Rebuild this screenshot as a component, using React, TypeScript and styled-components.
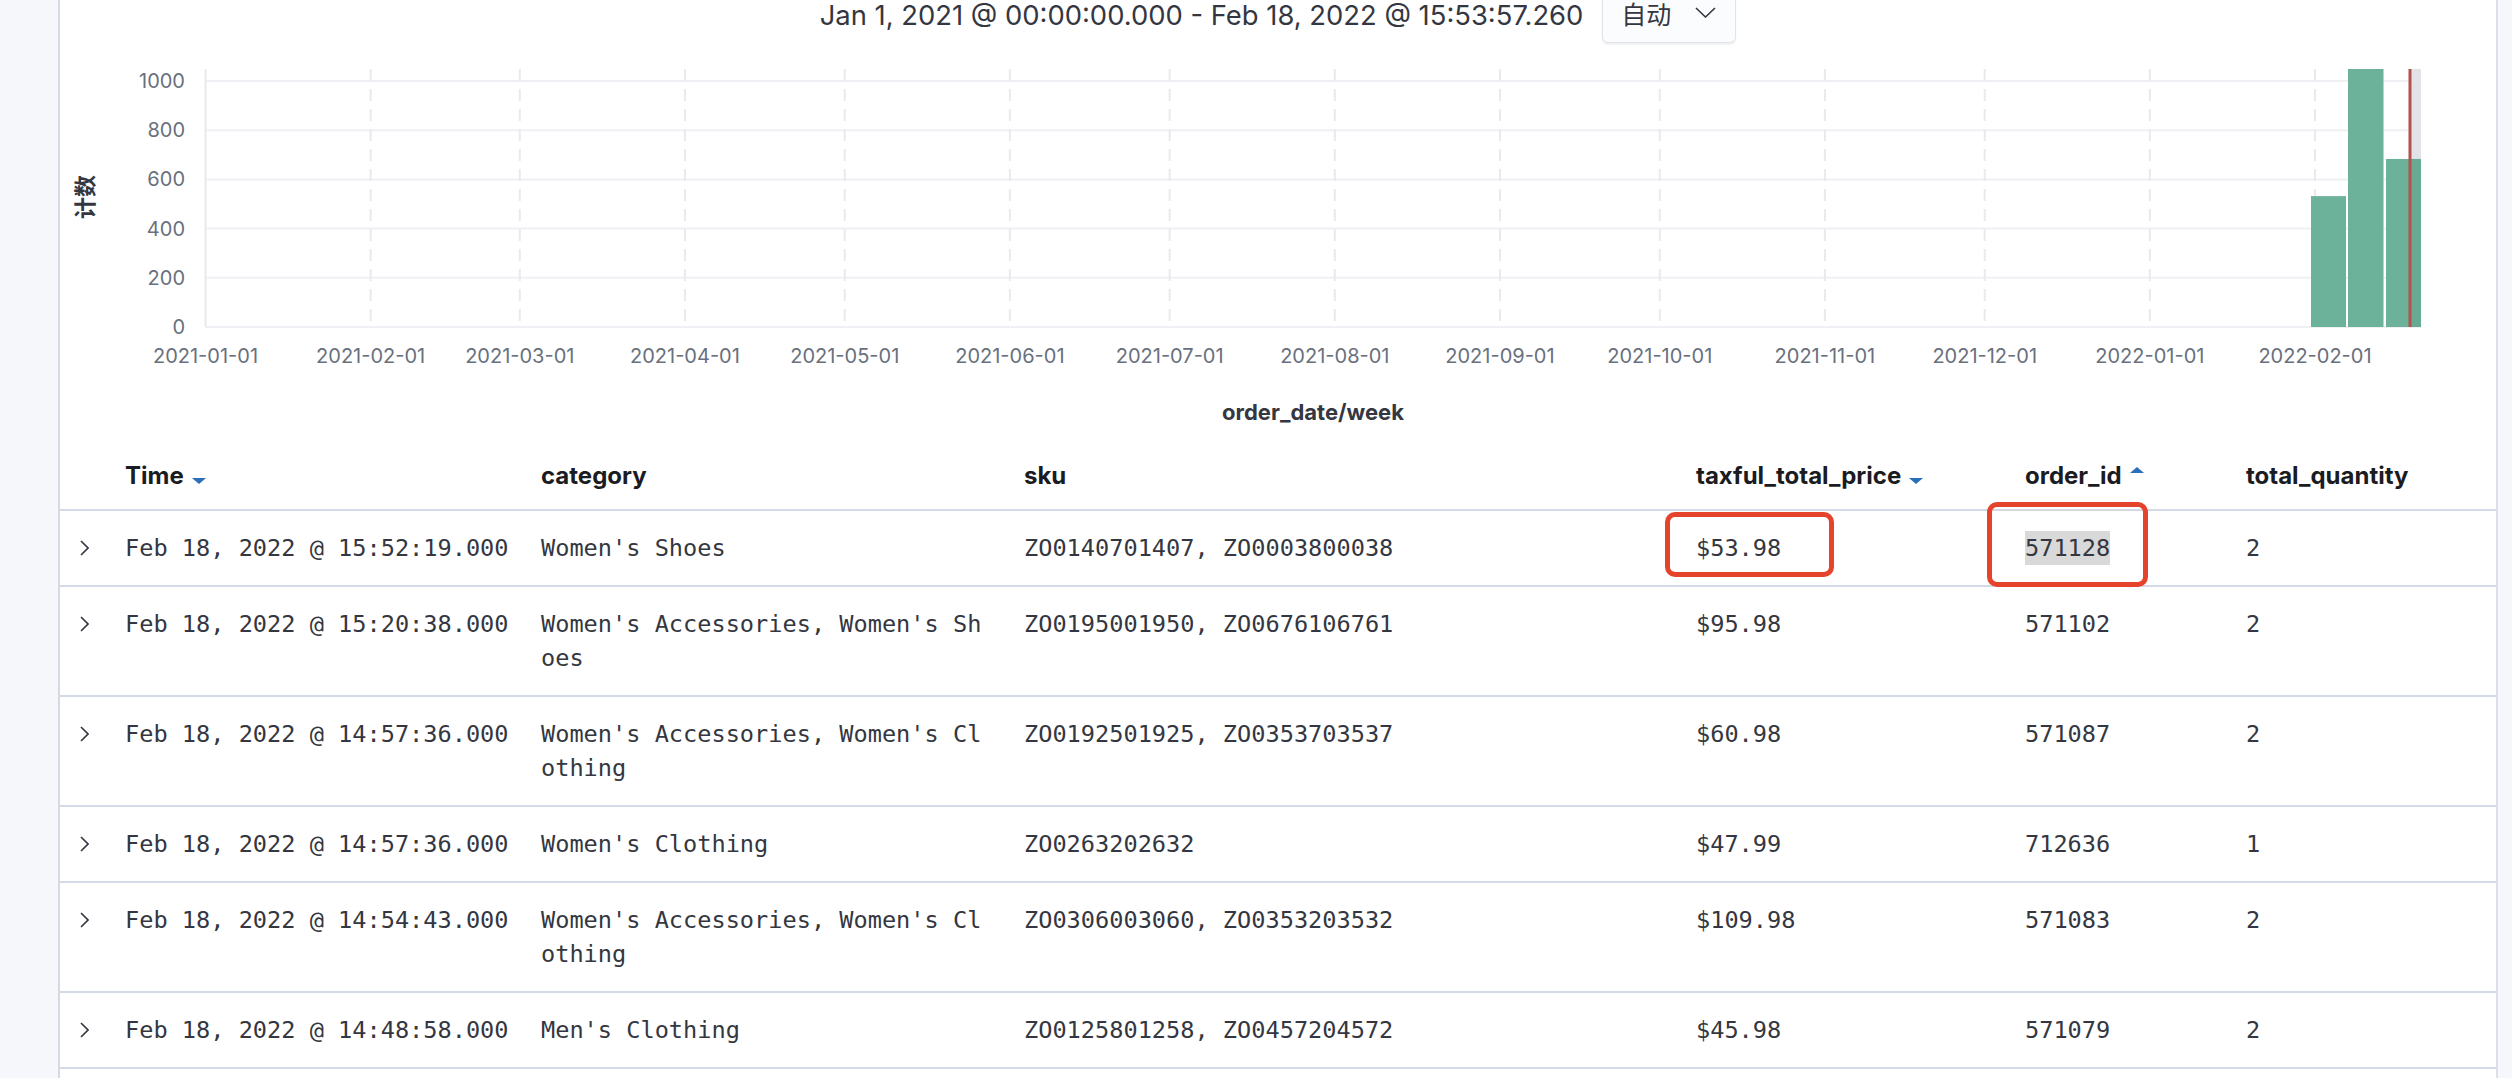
import styled, { createGlobalStyle } from 'styled-components'

const GlobalStyle = createGlobalStyle`
  html, body {
    margin: 0;
    padding: 0;
  }
  body {
    background: #f5f7fa;
    font-family: Inter, "Noto Sans CJK SC", sans-serif;
    color: #343741;
  }
`

const Page = styled.div`
  display: flex;
  min-height: 100vh;
  overflow: hidden;
`

const Gutter = styled.div<{ $w: number }>`
  flex: none;
  width: ${(p) => p.$w}px;
  background: #f6f7fb;
`

const Panel = styled.main`
  flex: 1;
  min-width: 0;
  background: #fff;
  border-left: 2px solid #d3dae6;
  border-right: 2px solid #dcdfea;
  display: flex;
  flex-direction: column;
`

const TopBar = styled.div`
  display: flex;
  justify-content: center;
  align-items: flex-start;
  gap: 19px;
  height: 51px;
  margin-top: -8px;
`

const Range = styled.span`
  margin-top: 8px;
  font-size: 27.4px;
  line-height: 30px;
  color: #343741;
  white-space: nowrap;
`

const IntervalButton = styled.button`
  display: flex;
  align-items: flex-start;
  justify-content: space-between;
  box-sizing: border-box;
  width: 134px;
  height: 51px;
  padding: 5px 19px 0 18px;
  background: #fbfcfd;
  border: 1px solid #e1e4ea;
  border-radius: 6px;
  box-shadow: 0 2px 2px rgba(0, 0, 0, 0.06);
  font-family: "Noto Sans CJK SC", sans-serif;
  font-size: 25px;
  line-height: 30px;
  color: #343741;

  svg {
    margin-top: 9px;
  }
`

const ChartSvg = styled.svg`
  display: block;
  font-family: Inter, "Noto Sans CJK SC", sans-serif;
`

const COLS = '65px 416px 483px 672px 329px 221px 1fr'

const HeaderRow = styled.div`
  display: grid;
  grid-template-columns: ${COLS};
  box-sizing: border-box;
  height: 72px;
  padding-top: 22px;
  border-bottom: 2px solid #d3dae6;
`

const HeadCell = styled.div`
  font-size: 24px;
  line-height: 30px;
  font-weight: 700;
  color: #1a1c21;
  white-space: nowrap;

  svg {
    vertical-align: baseline;
    margin-left: 8px;
  }
`

const Row = styled.div`
  display: grid;
  grid-template-columns: ${COLS};
  border-bottom: 2px solid #d3dae6;
`

const Cell = styled.div`
  position: relative;
  padding: 20px 30px 20px 0;
  font-family: "DejaVu Sans Mono", "Liberation Mono", monospace;
  font-size: 23.6px;
  line-height: 34px;
  color: #343741;
  word-break: break-all;
`

const ToggleCell = styled.div`
  display: flex;
  align-items: center;
  height: 34px;
  padding: 20px 0 0 20px;
`

const Marked = styled.span`
  display: inline-block;
  background: #d9d9d9;
`

const Callout = styled.span<{ $x: number; $y: number; $w: number; $h: number }>`
  position: absolute;
  left: ${(p) => p.$x}px;
  top: ${(p) => p.$y}px;
  width: ${(p) => p.$w}px;
  height: ${(p) => p.$h}px;
  box-sizing: border-box;
  border: 5px solid #e4432c;
  border-radius: 10px;
  pointer-events: none;
`

const SortIcon = ({ dir }: { dir: 'up' | 'down' }) => (
  <svg width="14" height="17" viewBox="0 0 14 17">
    {dir === 'down' ? (
      <polygon points="0,11 14,11 7,17" fill="#2a6fb9" />
    ) : (
      <polygon points="7,0 14,6 0,6" fill="#2a6fb9" />
    )}
  </svg>
)

const Chevron = () => (
  <svg width="9" height="16" viewBox="0 0 9 16">
    <polyline points="1,1 8,8 1,15" fill="none" stroke="#343741" strokeWidth="1.6" />
  </svg>
)

const X0 = 205.5
const DAY = 5.327
const yOf = (v: number) => 328 - v * 0.246

const months: [string, number][] = [
  ['2021-01-01', 0],
  ['2021-02-01', 31],
  ['2021-03-01', 59],
  ['2021-04-01', 90],
  ['2021-05-01', 120],
  ['2021-06-01', 151],
  ['2021-07-01', 181],
  ['2021-08-01', 212],
  ['2021-09-01', 243],
  ['2021-10-01', 273],
  ['2021-11-01', 304],
  ['2021-12-01', 334],
  ['2022-01-01', 365],
  ['2022-02-01', 396],
]

const bars = [
  { x: 2311, w: 35, v: 532 },
  { x: 2348, w: 35.5, v: 1050 },
  { x: 2386, w: 35, v: 683 },
]

const Histogram = () => (
  <ChartSvg width="2436" height="396" viewBox="60 44 2436 396">
    {[0, 200, 400, 600, 800, 1000].map((v) => (
      <g key={v}>
        <line x1={X0} x2={2421} y1={yOf(v)} y2={yOf(v)} stroke="#eef0f4" strokeWidth="2" />
        <text x={185} y={yOf(v)} dy="7" textAnchor="end" fontSize="20" fill="#69707d">
          {v}
        </text>
      </g>
    ))}
    {months.map(([label, d]) => {
      const x = X0 + d * DAY
      return (
        <g key={label}>
          <line
            x1={x}
            x2={x}
            y1={70}
            y2={328}
            stroke="#e8eaee"
            strokeWidth="2"
            strokeDasharray={d === 0 ? undefined : '12 8'}
          />
          <text x={x} y={364} textAnchor="middle" fontSize="20" fill="#69707d">
            {label}
          </text>
        </g>
      )
    })}
    <rect x={2410} y={70} width={11} height={258} fill="#e2e3e7" />
    {bars.map((b) => (
      <rect key={b.x} x={b.x} y={Math.max(70, yOf(b.v))} width={b.w} height={328 - Math.max(70, yOf(b.v))} fill="#6cb19a" />
    ))}
    <rect x={2410} y={yOf(683)} width={11} height={328 - yOf(683)} fill="#000" opacity="0.04" />
    <line x1={2410} x2={2410} y1={70} y2={328} stroke="#b3524d" strokeWidth="3" />
    <text
      x={0}
      y={0}
      transform="translate(93 198) rotate(-90)"
      textAnchor="middle"
      fontSize="22"
      fontWeight="700"
      fill="#343741"
    >
      计数
    </text>
    <text x={1313} y={421} textAnchor="middle" fontSize="22" fontWeight="700" fill="#343741">
      order_date/week
    </text>
  </ChartSvg>
)

type Doc = {
  time: string
  category: string
  sku: string
  price: string
  id: string
  qty: string
}

const docs: Doc[] = [
  { time: 'Feb 18, 2022 @ 15:52:19.000', category: "Women's Shoes", sku: 'ZO0140701407, ZO0003800038', price: '$53.98', id: '571128', qty: '2' },
  { time: 'Feb 18, 2022 @ 15:20:38.000', category: "Women's Accessories, Women's Shoes", sku: 'ZO0195001950, ZO0676106761', price: '$95.98', id: '571102', qty: '2' },
  { time: 'Feb 18, 2022 @ 14:57:36.000', category: "Women's Accessories, Women's Clothing", sku: 'ZO0192501925, ZO0353703537', price: '$60.98', id: '571087', qty: '2' },
  { time: 'Feb 18, 2022 @ 14:57:36.000', category: "Women's Clothing", sku: 'ZO0263202632', price: '$47.99', id: '712636', qty: '1' },
  { time: 'Feb 18, 2022 @ 14:54:43.000', category: "Women's Accessories, Women's Clothing", sku: 'ZO0306003060, ZO0353203532', price: '$109.98', id: '571083', qty: '2' },
  { time: 'Feb 18, 2022 @ 14:48:58.000', category: "Men's Clothing", sku: 'ZO0125801258, ZO0457204572', price: '$45.98', id: '571079', qty: '2' },
]

const App = () => {
  return (
    <>
      <GlobalStyle />
      <Page>
        <Gutter $w={58} />
        <Panel>
          <TopBar>
            <Range>Jan 1, 2021 @ 00:00:00.000 - Feb 18, 2022 @ 15:53:57.260</Range>
            <IntervalButton>
              自动
              <svg width="21" height="11" viewBox="0 0 21 11">
                <polyline points="1,1 10.5,10 20,1" fill="none" stroke="#343741" strokeWidth="1.6" />
              </svg>
            </IntervalButton>
          </TopBar>
          <Histogram />
          <HeaderRow>
            <div />
            <HeadCell>
              Time
              <SortIcon dir="down" />
            </HeadCell>
            <HeadCell>category</HeadCell>
            <HeadCell>sku</HeadCell>
            <HeadCell>
              taxful_total_price
              <SortIcon dir="down" />
            </HeadCell>
            <HeadCell>
              order_id
              <SortIcon dir="up" />
            </HeadCell>
            <HeadCell>total_quantity</HeadCell>
          </HeaderRow>
          {docs.map((d, i) => (
            <Row key={i}>
              <ToggleCell>
                <Chevron />
              </ToggleCell>
              <Cell>{d.time}</Cell>
              <Cell>{d.category}</Cell>
              <Cell>{d.sku}</Cell>
              <Cell>
                {d.price}
                {i === 0 && <Callout $x={-31} $y={1} $w={169} $h={65} />}
              </Cell>
              <Cell>
                {i === 0 ? <Marked>{d.id}</Marked> : d.id}
                {i === 0 && <Callout $x={-38} $y={-9} $w={161} $h={85} />}
              </Cell>
              <Cell>{d.qty}</Cell>
            </Row>
          ))}
        </Panel>
        <Gutter $w={14} />
      </Page>
    </>
  )
}

export default App
